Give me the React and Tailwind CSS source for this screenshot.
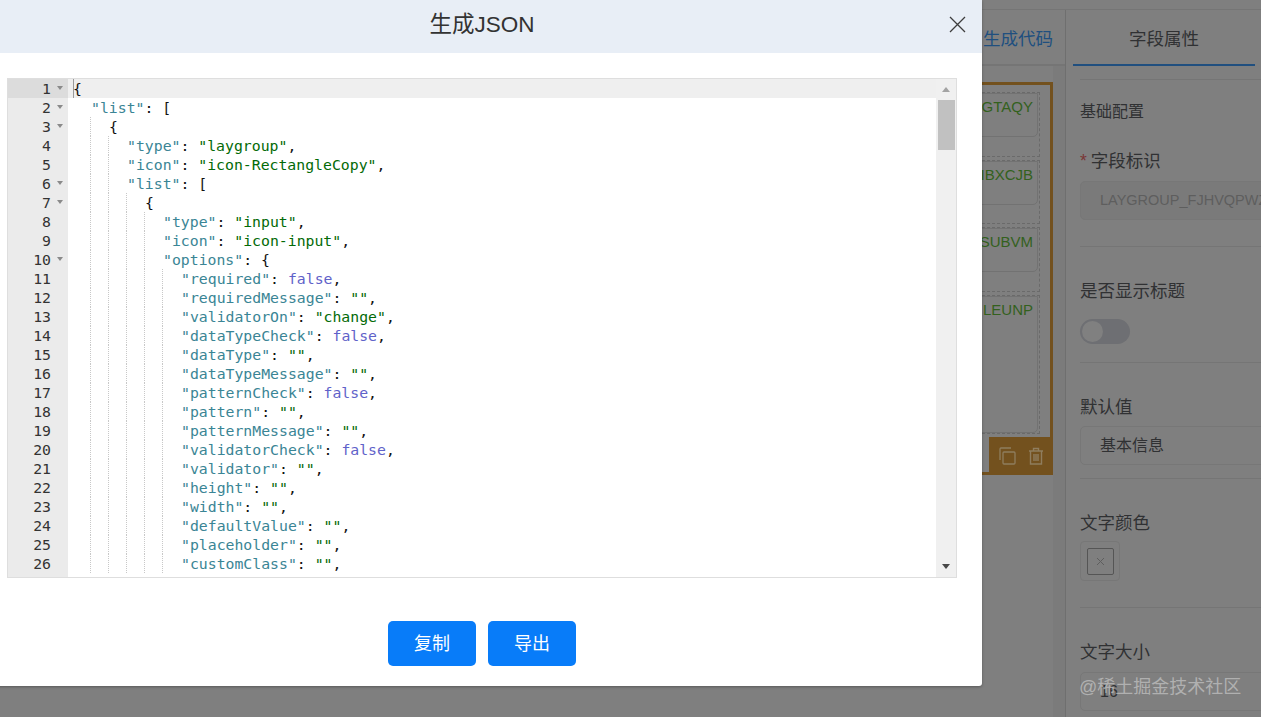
const code = [
  [0, [["p", "{"]], 1],
  [1, [["k", '"list"'], ["p", ": "], ["p", "["]], 1],
  [2, [["p", "{"]], 1],
  [3, [["k", '"type"'], ["p", ": "], ["s", '"laygroup"'], ["p", ","]]],
  [3, [["k", '"icon"'], ["p", ": "], ["s", '"icon-RectangleCopy"'], ["p", ","]]],
  [3, [["k", '"list"'], ["p", ": "], ["p", "["]], 1],
  [4, [["p", "{"]], 1],
  [5, [["k", '"type"'], ["p", ": "], ["s", '"input"'], ["p", ","]]],
  [5, [["k", '"icon"'], ["p", ": "], ["s", '"icon-input"'], ["p", ","]]],
  [5, [["k", '"options"'], ["p", ": "], ["p", "{"]], 1],
  [6, [["k", '"required"'], ["p", ": "], ["b", "false"], ["p", ","]]],
  [6, [["k", '"requiredMessage"'], ["p", ": "], ["s", '""'], ["p", ","]]],
  [6, [["k", '"validatorOn"'], ["p", ": "], ["s", '"change"'], ["p", ","]]],
  [6, [["k", '"dataTypeCheck"'], ["p", ": "], ["b", "false"], ["p", ","]]],
  [6, [["k", '"dataType"'], ["p", ": "], ["s", '""'], ["p", ","]]],
  [6, [["k", '"dataTypeMessage"'], ["p", ": "], ["s", '""'], ["p", ","]]],
  [6, [["k", '"patternCheck"'], ["p", ": "], ["b", "false"], ["p", ","]]],
  [6, [["k", '"pattern"'], ["p", ": "], ["s", '""'], ["p", ","]]],
  [6, [["k", '"patternMessage"'], ["p", ": "], ["s", '""'], ["p", ","]]],
  [6, [["k", '"validatorCheck"'], ["p", ": "], ["b", "false"], ["p", ","]]],
  [6, [["k", '"validator"'], ["p", ": "], ["s", '""'], ["p", ","]]],
  [6, [["k", '"height"'], ["p", ": "], ["s", '""'], ["p", ","]]],
  [6, [["k", '"width"'], ["p", ": "], ["s", '""'], ["p", ","]]],
  [6, [["k", '"defaultValue"'], ["p", ": "], ["s", '""'], ["p", ","]]],
  [6, [["k", '"placeholder"'], ["p", ": "], ["s", '""'], ["p", ","]]],
  [6, [["k", '"customClass"'], ["p", ": "], ["s", '""'], ["p", ","]]],
];

const tokenClass = {
  k: "text-[#3a8595]",
  s: "text-[#036a07]",
  b: "text-[#5f62c9]",
  p: "text-[#111]",
};

function Guides({ level }) {
  return (
    <>
      {Array.from({ length: level }).map((_, i) => (
        <span
          key={i}
          className={`inline-block w-[18px] h-[19px] align-top ${i < level - 1 ? "border-r border-dotted border-[#c8c8c8]" : ""}`}
        />
      ))}
    </>
  );
}

function Editor() {
  return (
    <div className="relative h-[500px] border border-[#dedede] overflow-hidden flex font-['DejaVu_Sans_Mono',monospace] text-[14.8px] leading-[19px]">
      <div className="w-[60px] shrink-0 bg-[#ebebeb] text-[#333]">
        {code.map((line, i) => (
          <div key={i} className={`relative h-[19px] pr-[17px] text-right ${i === 0 ? "bg-[#dcdcdc]" : ""}`}>
            <span>{i + 1}</span>
            {line[2] ? (
              <span className="absolute right-[5px] top-[7px] w-0 h-0 border-x-[3.5px] border-x-transparent border-t-[4px] border-t-[#8a8a8a]" />
            ) : null}
          </div>
        ))}
      </div>
      <div className="flex-1 min-w-0 whitespace-pre">
        {code.map((line, i) => (
          <div key={i} className={`relative h-[19px] pl-[5px] ${i === 0 ? "bg-[#efefef]" : ""}`}>
            {i === 0 ? <span className="absolute left-[5px] top-0 w-px h-[19px] bg-[#9a9a9a]" /> : null}
            <Guides level={line[0]} />
            <span>
              {line[1].map((t, j) => (
                <span key={j} className={tokenClass[t[0]]}>{t[1]}</span>
              ))}
            </span>
          </div>
        ))}
      </div>
      <div className="absolute right-0 top-0 bottom-0 w-[20px] bg-[#f0f0f0] flex flex-col items-center">
        <span className="mt-[8px] w-0 h-0 border-x-[4.5px] border-x-transparent border-b-[5px] border-b-[#a3a3a3]" />
        <span className="mt-[8px] ml-[1px] w-[17px] h-[50px] bg-[#c1c1c1]" />
        <span className="mt-auto mb-[8px] w-0 h-0 border-x-[4.5px] border-x-transparent border-t-[5px] border-t-[#484848]" />
      </div>
    </div>
  );
}

function Modal() {
  return (
    <div className="absolute left-[-18px] top-0 w-[1000px] h-[686px] bg-white rounded-b-[3px] shadow-[0_1px_3px_rgba(0,0,0,0.3)] flex flex-col">
      <div className="relative h-[53px] shrink-0 bg-[#e8eef6] flex items-center justify-center pb-[4px] text-[22.5px] text-[#333]">
        生成JSON
        <svg className="absolute right-[16px] top-[16px]" width="17" height="17" viewBox="0 0 17 17" fill="none" stroke="#3d3d3d" strokeWidth="1.3">
          <path d="M1 1 L16 16 M16 1 L1 16" />
        </svg>
      </div>
      <div className="px-[25px] pt-[25px]">
        <Editor />
      </div>
      <div className="flex justify-center gap-3 mt-[43px]">
        <button className="w-[88px] h-[45px] rounded-[5px] bg-[#087cf9] text-white text-lg">复制</button>
        <button className="w-[88px] h-[45px] rounded-[5px] bg-[#087cf9] text-white text-lg">导出</button>
      </div>
    </div>
  );
}

function FieldRow({ label, height, inner }) {
  return (
    <div className={`border border-dashed border-[#6a6a6a] mb-[3px] ${height}`}>
      <div className={`mr-px ${inner} border border-[#727272] rounded-br-[5px] flex justify-end`}>
        <span className="mr-[4px] mt-[4px] text-[15px] leading-[18px] text-[#33611d]">{label}</span>
      </div>
    </div>
  );
}

function Canvas() {
  return (
    <div className="flex-1 min-w-0 flex">
      <div className="flex-1 min-w-0 flex flex-col">
        <div className="h-[56px] shrink-0 border-b-2 border-[#757575] flex items-center justify-end pt-1">
          <span className="text-[17.5px] text-[#204f7f]">生成代码</span>
        </div>
        <div className="flex-1 pt-[16px]">
          <div className="relative h-[393px] border-[3px] border-[#73511e] pt-[7px] pr-[10px] pl-[600px] ml-[-600px]">
            <FieldRow label="GTAQY" height="h-[65px]" inner="h-[44px]" />
            <FieldRow label="IBXCJB" height="h-[64px]" inner="h-[44px]" />
            <FieldRow label="SUBVM" height="h-[65px]" inner="h-[44px]" />
            <FieldRow label="LEUNP" height="h-[139px]" inner="h-[137px]" />
            <div className="absolute right-[-3px] bottom-[-3px] w-[64px] h-[38px] bg-[#73511e] flex items-center justify-center gap-[12px]">
              <svg width="18" height="18" viewBox="0 0 18 18" fill="none" stroke="#8f7d5e" strokeWidth="1.3">
                <rect x="5" y="5" width="12" height="12" rx="1" />
                <path d="M2 13 V2 a1 1 0 0 1 1 -1 H13" />
              </svg>
              <svg width="16" height="18" viewBox="0 0 16 18" fill="none" stroke="#8f7d5e" strokeWidth="1.4">
                <path d="M1 4 H15 M5.5 4 V1.5 H10.5 V4 M2.5 4 V17 H13.5 V4 M6 7 V14 M8 7 V14 M10 7 V14" />
              </svg>
            </div>
          </div>
        </div>
      </div>
      <div className="w-[13px] shrink-0 flex flex-col border-r border-[#6f6f6f]">
        <div className="h-[56px] shrink-0 border-b-2 border-[#757575]" />
        <div className="flex-1 bg-[#7b7b7b]" />
      </div>
    </div>
  );
}

function Section({ children, className = "" }) {
  return <div className={`border-b border-[#757575] ${className}`}>{children}</div>;
}

function Box({ children, muted }) {
  return (
    <div className={`h-[39px] w-[260px] border border-[#777] rounded-[5px] pl-[19px] flex items-center whitespace-nowrap ${muted ? "text-[14.5px] text-[#5e5e5e] bg-[#7a7a7a]" : "text-base text-[#303133]"}`}>
      {children}
    </div>
  );
}

function Panel() {
  return (
    <div className="w-[195px] shrink-0 overflow-hidden">
      <div className="h-[56px] pl-[7px] flex flex-col">
        <div className="flex-1 w-[182px] flex items-center justify-center text-[17.5px] text-[#303133] pt-1">字段属性</div>
        <div className="w-[182px] h-[2px] bg-[#204f7f]" />
      </div>
      <div className="pl-[14px] mt-[13px]">
        <Section className="h-[168px] border-t pt-[22px]">
          <div className="text-base text-[#303133] leading-[20px]">基础配置</div>
          <div className="mt-[28px] text-[17.5px] leading-[22px] text-[#303133]"><span className="text-[#7a3636] mr-1">*</span>字段标识</div>
          <div className="mt-[9px]"><Box muted>LAYGROUP_FJHVQPWZ</Box></div>
        </Section>
        <Section className="h-[116px] pt-[33px]">
          <div className="text-[17.5px] leading-[22px] text-[#303133]">是否显示标题</div>
          <div className="mt-[17px] w-[50px] h-[25px] rounded-full bg-[#6e6f73] p-[2px]">
            <div className="w-[21px] h-[21px] rounded-full bg-[#808080]" />
          </div>
        </Section>
        <Section className="h-[116px] pt-[33px]">
          <div className="text-[17.5px] leading-[22px] text-[#303133]">默认值</div>
          <div className="mt-[8px]"><Box>基本信息</Box></div>
        </Section>
        <Section className="h-[129px] pt-[33px]">
          <div className="text-[17.5px] leading-[22px] text-[#303133]">文字颜色</div>
          <div className="mt-[7px] w-[40px] h-[40px] border border-[#777] rounded-[4px] flex items-center justify-center">
            <div className="w-[27px] h-[27px] border border-[#555] rounded-[2px] flex items-center justify-center">
              <svg width="9" height="9" viewBox="0 0 9 9" stroke="#5e5e5e" strokeWidth="1" fill="none"><path d="M1 1 L8 8 M8 1 L1 8" /></svg>
            </div>
          </div>
        </Section>
        <div className="pt-[33px]">
          <div className="text-[17.5px] leading-[22px] text-[#303133]">文字大小</div>
          <div className="mt-[9px]"><Box>16</Box></div>
        </div>
      </div>
    </div>
  );
}

export default function App() {
  return (
    <div className="relative w-[1261px] h-[717px] overflow-hidden bg-[#7f7f7f] font-['Liberation_Sans','Noto_Sans_CJK_SC',sans-serif]">
      <div className="h-[10px] border-b border-[#757575]" />
      <div className="flex h-[707px]">
        <Canvas />
        <Panel />
      </div>
      <Modal />
      <div className="absolute left-[1079px] top-[673px] text-lg text-[#bdbdbd] opacity-80 whitespace-nowrap">@稀土掘金技术社区</div>
    </div>
  );
}
